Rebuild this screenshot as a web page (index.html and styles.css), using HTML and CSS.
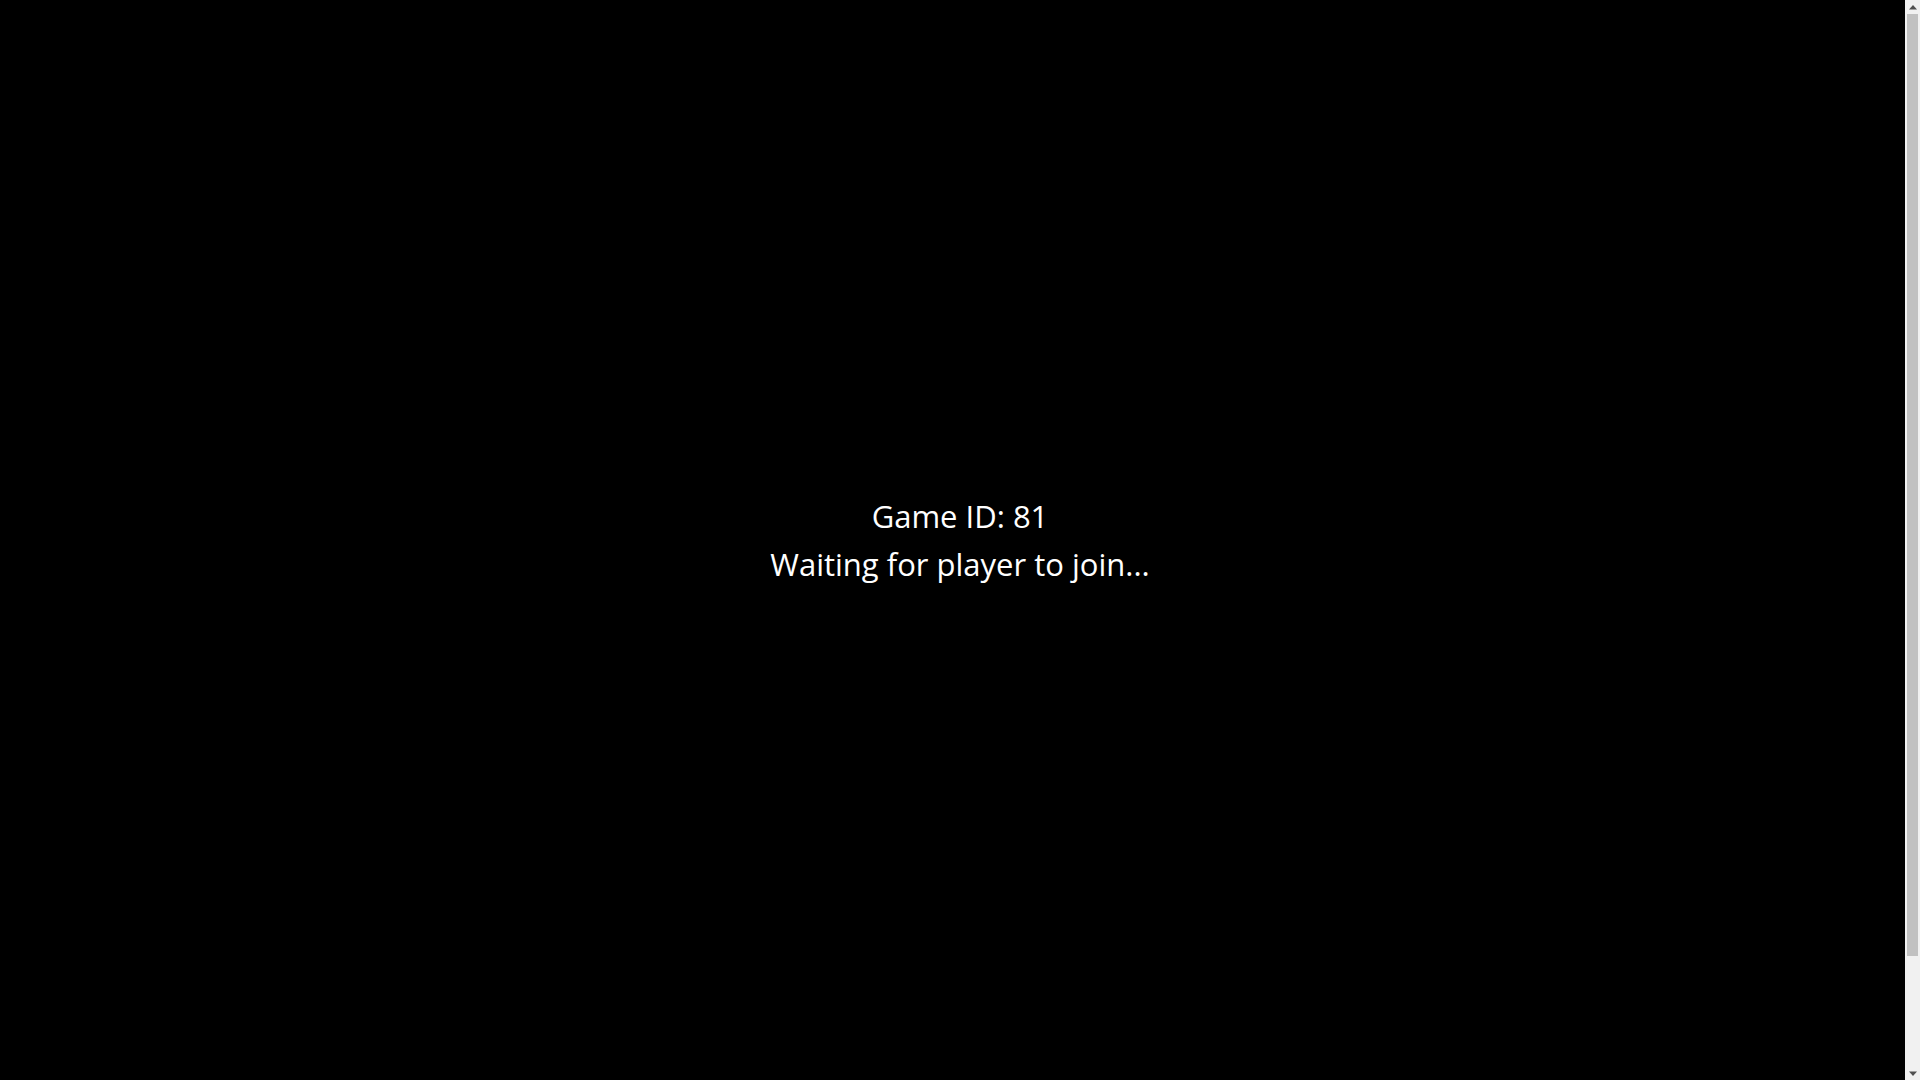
FILE: index.html
```html
<!DOCTYPE html>
<html>
<head>
<meta charset="utf-8">
<link rel="stylesheet" href="styles.css">
</head>
<body>
<div class="screen">
  <div class="status">
    <div class="line">Game ID: 81</div>
    <div class="line">Waiting for player to join...</div>
  </div>
</div>
<div class="scrollbar">
  <div class="sb-btn">
    <svg width="8" height="5" viewBox="0 0 8 5"><polygon points="4,0 8,4.5 0,4.5" fill="#505050"/></svg>
  </div>
  <div class="sb-track">
    <div class="sb-thumb"></div>
  </div>
  <div class="sb-btn">
    <svg width="8" height="5" viewBox="0 0 8 5"><polygon points="0,0.5 8,0.5 4,5" fill="#505050"/></svg>
  </div>
</div>
</body>
</html>
```
FILE: styles.css
```css
html {
  background: #000;
}
body {
  margin: 0;
  background: #000;
  color: #fff;
  font-family: "Open Sans", "Noto Sans", sans-serif;
  overflow: hidden;
}
.screen {
  width: 100vw;
  height: 100vh;
  display: flex;
  align-items: center;
  justify-content: center;
}
.status {
  text-align: center;
}
.line {
  font-size: 31px;
  line-height: 48px;
}
.scrollbar {
  position: fixed;
  top: 0;
  right: 0;
  width: 15px;
  height: 100vh;
  background: #f1f1f1;
  display: flex;
  flex-direction: column;
}
.sb-btn {
  height: 14px;
  display: flex;
  align-items: center;
  justify-content: center;
}
.sb-track {
  flex: 1;
  padding: 0 2px;
}
.sb-thumb {
  height: 942px;
  background: #c1c1c1;
}
```
